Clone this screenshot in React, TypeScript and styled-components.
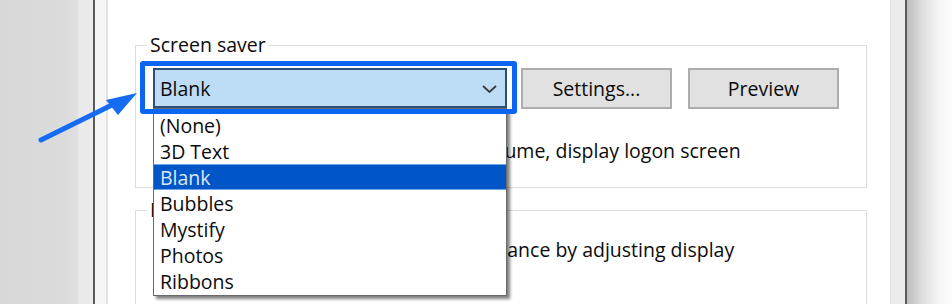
import React from "react";
import styled, { createGlobalStyle } from "styled-components";

const Global = createGlobalStyle`
  html, body { margin: 0; padding: 0; }
  body {
    width: 952px;
    height: 304px;
    overflow: hidden;
    background: #ffffff;
    font-family: "Open Sans", "Noto Sans", sans-serif;
    color: #0c0c0c;
  }
`;

const Page = styled.div`
  position: relative;
  display: flex;
  width: 952px;
  height: 304px;
  overflow: hidden;
  font-size: 19.5px;
  font-weight: 500;
`;

const LeftBackdrop = styled.div`
  width: 78px;
  flex: none;
  background: linear-gradient(to right, #d8d8d8, #dbdbdb 85%, #e1e1e1);
`;

const FrameLeft = styled.div`
  width: 30px;
  flex: none;
  background: linear-gradient(
    to right,
    #eaeaea 0 15px,
    #5b5b5b 15px 17px,
    #f6f6f6 17px 28px,
    #e2e2e2 28px 30px
  );
`;

const FrameRight = styled.div`
  width: 17px;
  flex: none;
  background: linear-gradient(to right, #e4e4e4 0 1px, #ebebeb 1px 15px, #5b5b5b 15px 17px);
`;

const RightBackdrop = styled.div`
  flex: 1;
  background: linear-gradient(to right, #bdbdbd, #dedede 35%, #f6f6f6 70%, #fbfbfb);
`;

const Content = styled.div`
  width: 782px;
  flex: none;
  display: flex;
  flex-direction: column;
  background: #fff;
`;

const TopFragments = styled.div`
  display: flex;
  gap: 20px;
  height: 1px;
  padding-left: 2px;
  margin-bottom: 32px;
`;

const Fragment = styled.div<{ $w: number }>`
  width: ${(p) => p.$w}px;
  background: #e6e6e6;
`;

const Group = styled.fieldset<{ $mt: number; $pt: number; $pb: number }>`
  margin: ${(p) => p.$mt}px 23px 0 27px;
  padding: ${(p) => p.$pt}px 0 ${(p) => p.$pb}px 0;
  border: 1px solid #dcdcdc;
  min-width: 0;
`;

const Legend = styled.legend`
  margin-left: 11px;
  padding: 0 3px;
  font-size: 19.5px;
  line-height: 26px;
`;

const ControlRow = styled.div`
  display: flex;
  align-items: flex-start;
  padding-left: 4px;
`;

const FocusRing = styled.div`
  position: relative;
  padding: 7px 10px 6px 13px;
  &::after {
    content: "";
    position: absolute;
    inset: 0;
    border: 5px solid #0a66f2;
    border-radius: 3px;
    z-index: 3;
    pointer-events: none;
  }
`;

const Combo = styled.div`
  position: relative;
  box-sizing: border-box;
  width: 354px;
  height: 40px;
  border: 2px solid #2b4f76;
  background: #bddcf5;
  display: flex;
  align-items: center;
  justify-content: space-between;
  padding: 1px 8px 0 5px;
  line-height: 26px;
`;

const Chevron = styled.svg`
  width: 15px;
  height: 8px;
  flex: none;
`;

const DropList = styled.ul`
  position: absolute;
  top: calc(100% + 2px);
  left: -2px;
  z-index: 2;
  box-sizing: border-box;
  width: 354px;
  height: 188px;
  margin: 0;
  padding: 3px 0 1px;
  list-style: none;
  background: #fff;
  border: 1px solid #6a6a6a;
  box-shadow: 3px 3px 3px rgba(0, 0, 0, 0.5);
`;

const Option = styled.li<{ $selected?: boolean }>`
  height: 26px;
  line-height: 27px;
  padding-left: 6px;
  white-space: nowrap;
  color: ${(p) => (p.$selected ? "#dce9fb" : "#0c0c0c")};
  background: ${(p) => (p.$selected ? "#0056c6" : "transparent")};
  box-shadow: ${(p) =>
    p.$selected ? "inset 0 1px 0 #6fa3ea, inset 0 -1px 0 #6fa3ea" : "none"};
`;

const Button = styled.button<{ $ml: number }>`
  margin: 7px 0 0 ${(p) => p.$ml}px;
  width: 151px;
  height: 41px;
  box-sizing: border-box;
  background: #e1e1e1;
  border: 2px solid #adadad;
  border-radius: 0;
  font-family: inherit;
  font-size: 19.5px;
  font-weight: 500;
  line-height: 26px;
  color: #0c0c0c;
  padding: 0;
`;

const CheckRow = styled.div`
  display: flex;
  align-items: center;
  height: 26px;
  margin-top: 24px;
  padding-left: 278px;
  line-height: 26px;
  white-space: nowrap;
`;

const CheckBox = styled.span`
  box-sizing: border-box;
  width: 16px;
  height: 16px;
  border: 1px solid #333;
  margin-right: 14px;
  flex: none;
`;

const BodyText = styled.p`
  margin: 0;
  padding-left: 22px;
  line-height: 26px;
  white-space: nowrap;
`;

const Arrow = styled.svg`
  position: absolute;
  left: 0;
  top: 0;
  width: 150px;
  height: 160px;
  z-index: 5;
  pointer-events: none;
`;

const options = ["(None)", "3D Text", "Blank", "Bubbles", "Mystify", "Photos", "Ribbons"];

export default function App() {
  return (
    <>
      <Global />
      <Page>
        <LeftBackdrop />
        <FrameLeft />
        <Content>
          <TopFragments>
            <Fragment $w={103} />
            <Fragment $w={67} />
          </TopFragments>
          <Group $mt={0} $pt={3} $pb={23}>
            <Legend>Screen saver</Legend>
            <ControlRow>
              <FocusRing>
                <Combo>
                  <span>Blank</span>
                  <Chevron viewBox="0 0 15 8">
                    <polyline
                      points="1,1 7.5,7 14,1"
                      fill="none"
                      stroke="#3a3a3a"
                      strokeWidth="1.8"
                    />
                  </Chevron>
                  <DropList>
                    {options.map((o) => (
                      <Option key={o} $selected={o === "Blank"}>
                        {o}
                      </Option>
                    ))}
                  </DropList>
                </Combo>
              </FocusRing>
              <Button $ml={4}>Settings...</Button>
              <Button $ml={16}>Preview</Button>
            </ControlRow>
            <CheckRow>
              <CheckBox />
              <span>On resume, display logon screen</span>
            </CheckRow>
          </Group>
          <Group $mt={9} $pt={14} $pb={60}>
            <Legend>Power management</Legend>
            <BodyText>Conserve energy or maximize performance by adjusting display</BodyText>
          </Group>
        </Content>
        <FrameRight />
        <RightBackdrop />
        <Arrow viewBox="0 0 150 160">
          <line
            x1="41"
            y1="140"
            x2="116"
            y2="103"
            stroke="#156cf2"
            strokeWidth="5"
            strokeLinecap="round"
          />
          <polygon points="137,93 106,100 118,115" fill="#156cf2" />
        </Arrow>
      </Page>
    </>
  );
}
